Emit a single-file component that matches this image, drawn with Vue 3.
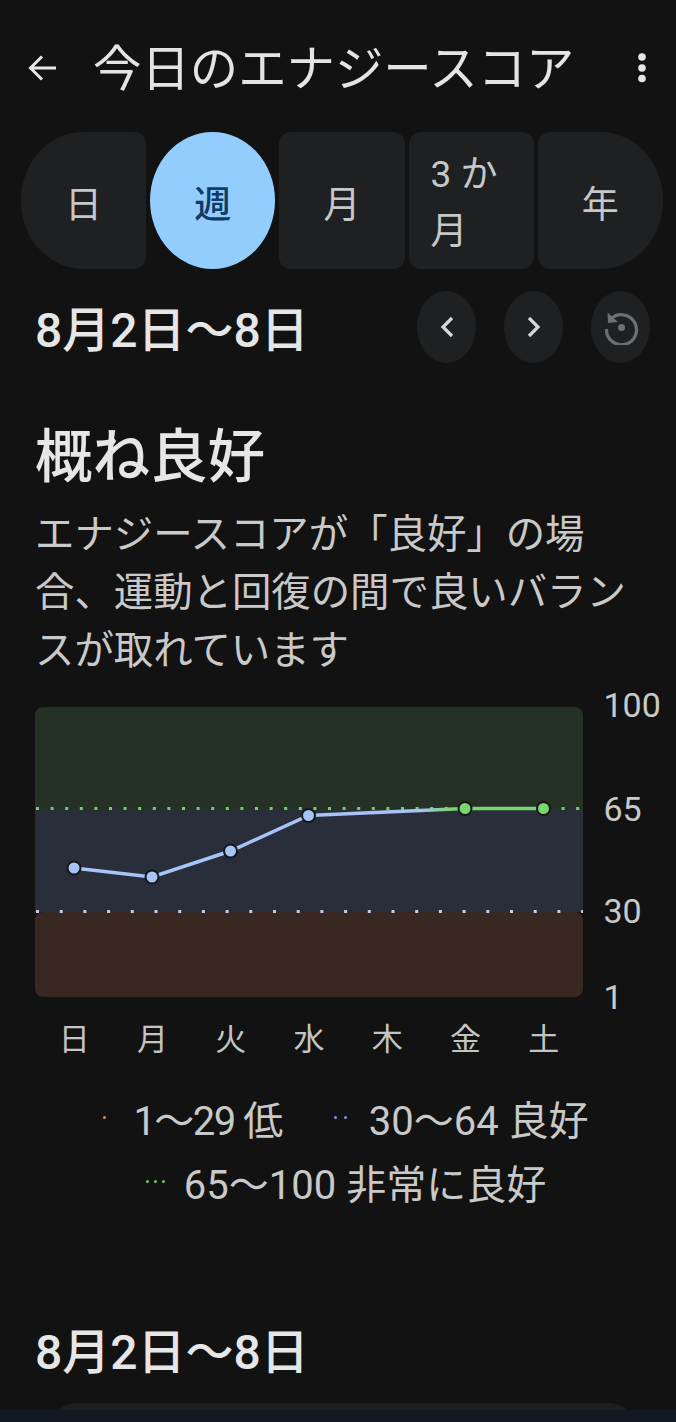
<template>
  <div class="page">
    <header class="top-bar">
      <svg class="back" width="30" height="28" viewBox="0 0 30 28">
        <path d="M28 14H3M14 2.5 2.5 14 14 25.5" fill="none" stroke="#e6e6e6" stroke-width="3" />
      </svg>
      <h1 class="title">今日のエナジースコア</h1>
      <svg class="more" width="10" height="32" viewBox="0 0 10 32">
        <circle cx="5" cy="5" r="3.8" fill="#e6e6e6" />
        <circle cx="5" cy="16" r="3.8" fill="#e6e6e6" />
        <circle cx="5" cy="26.500" r="3.800" fill="#e6e6e6" />
      </svg>
    </header>

    <div class="segments">
      <button
        v-for="(tab, i) in tabs"
        :key="tab"
        class="segment"
        :class="{ first: i === 0, last: i === tabs.length - 1, active: tab === '週', wrap: tab.length > 2 }"
      >{{ tab }}</button>
    </div>

    <div class="date-row">
      <div class="date">8月2日〜8日</div>
      <div class="date-buttons">
        <button class="round-btn">
          <svg width="16" height="22" viewBox="0 0 16 22">
            <path d="M13 2 4 11l9 9" fill="none" stroke="#d5d6d6" stroke-width="3.200" />
          </svg>
        </button>
        <button class="round-btn">
          <svg width="16" height="22" viewBox="0 0 16 22">
            <path d="m3 2 9 9-9 9" fill="none" stroke="#d5d6d6" stroke-width="3.200" />
          </svg>
        </button>
        <button class="round-btn">
          <svg width="36" height="36" viewBox="0 0 36 36">
            <path d="M7.500 10.500A15 15 0 1 1 3.500 20" fill="none" stroke="#6d6f70" stroke-width="3.200" />
            <path d="M4.500 3.500 5 14l10-1z" fill="#6d6f70" />
            <circle cx="18.500" cy="18.500" r="3.500" fill="#6d6f70" />
          </svg>
        </button>
      </div>
    </div>

    <section class="summary">
      <h2 class="status">概ね良好</h2>
      <p class="desc">エナジースコアが「良好」の場合、運動と回復の間で良いバランスが取れています</p>
    </section>

    <div class="chart">
      <div class="plot">
        <div class="band high"></div>
        <div class="band mid"></div>
        <div class="band low"></div>
        <svg class="lines" width="548" height="290" viewBox="0 0 548 290">
          <defs>
            <linearGradient id="scoreLine" gradientUnits="userSpaceOnUse" x1="0" y1="0" x2="548" y2="0">
              <stop offset="0.7" stop-color="#a6c4f6" />
              <stop offset="0.76" stop-color="#78d56f" />
            </linearGradient>
          </defs>
          <line x1="1" y1="101.500" x2="548" y2="101.500" stroke="#72cf6b" stroke-width="3" stroke-dasharray="3 11.600" />
          <line x1="1" y1="204.500" x2="548" y2="204.500" stroke="#c0cff0" stroke-width="3" stroke-dasharray="3 20.700" />
          <polyline :points="linePoints" fill="none" stroke="url(#scoreLine)" stroke-width="3.500" />
          <circle
            v-for="p in points"
            :key="p.x"
            :cx="p.x"
            :cy="p.y"
            r="6.500"
            :fill="p.good ? '#78d56f' : '#a6c4f6'"
            stroke="#14161a"
            stroke-width="2"
          />
        </svg>
        <span
          v-for="a in axis"
          :key="a.label"
          class="axis-label"
          :style="{ top: a.top + 'px' }"
        >{{ a.label }}</span>
      </div>
      <div class="days">
        <span v-for="d in days" :key="d" class="day">{{ d }}</span>
      </div>
    </div>

    <div class="legend">
      <div class="legend-row">
        <div class="legend-item">
          <span class="marks"><i class="mark orange"></i></span>
          <span class="tight">1〜29 低</span>
        </div>
        <div class="legend-item">
          <span class="marks blue-marks"><i class="mark blue"></i><i class="mark blue"></i></span>
          <span>30〜64 良好</span>
        </div>
      </div>
      <div class="legend-row">
        <div class="legend-item">
          <span class="marks green-marks"><i class="mark green"></i><i class="mark green"></i><i class="mark green"></i></span>
          <span>65〜100 非常に良好</span>
        </div>
      </div>
    </div>

    <div class="date second">8月2日〜8日</div>

    <div class="bottom">
      <div class="next-card"></div>
      <div class="nav-strip"></div>
    </div>
  </div>
</template>

<script setup>
const tabs = ['日', '週', '月', '3 か月', '年']
const days = ['日', '月', '火', '水', '木', '金', '土']

// x and y inside the plot, the last two are already in the green band
const points = [
  { x: 39, y: 161 },
  { x: 117, y: 170 },
  { x: 195.500, y: 144 },
  { x: 273.500, y: 108.500 },
  { x: 430, y: 101.500, good: true },
  { x: 508.500, y: 101.500, good: true },
]
const linePoints = points.map((p) => p.x + ',' + p.y).join(' ')

const axis = [
  { label: '100', top: -23 },
  { label: '65', top: 81 },
  { label: '30', top: 183 },
  { label: '1', top: 269 },
]
</script>

<style>
html,
body {
  background: #121212;
  overflow: hidden;
}
</style>

<style scoped>
.page {
  width: 676px;
  height: 1422px;
  box-sizing: border-box;
  position: relative;
  overflow: hidden;
  background: #121212;
  color: #e6e6e6;
  font-family: Roboto, "Noto Sans CJK JP", sans-serif;
}

.top-bar {
  display: flex;
  align-items: center;
  height: 132px;
  padding: 4px 0 0 28px;
  box-sizing: border-box;
}

.title {
  margin: 3px 0 0 35px;
  font-size: 48.400px;
  font-weight: 400;
  line-height: 60px;
  color: #e4e4e4;
  white-space: nowrap;
}

.more {
  margin-left: 62px;
}

.segments {
  display: flex;
  gap: 4px;
  padding-left: 21px;
}

.segment {
  width: 125.200px;
  height: 137px;
  flex: none;
  border: 0;
  border-radius: 12px;
  padding: 9px 22px 0;
  background: #1e2022;
  color: #c6c7c7;
  font: inherit;
  font-size: 37px;
  line-height: 57px;
}

.segment.wrap {
  padding-top: 5px;
  text-align: left;
}

.segment.first {
  border-radius: 62px 12px 12px 62px / 68px 12px 12px 68px;
}

.segment.last {
  border-radius: 12px 62px 62px 12px / 12px 68px 68px 12px;
}

.segment.active {
  border-radius: 50%;
  background: #93cdfd;
  color: #0f3c66;
  font-weight: 500;
}

.date-row {
  display: flex;
  justify-content: space-between;
  align-items: flex-start;
  padding: 22px 26px 0 35px;
}

.date {
  padding-top: 4px;
  font-size: 48px;
  font-weight: 500;
  line-height: 72px;
  color: #e6e6e6;
  white-space: nowrap;
}

.date-buttons {
  display: flex;
  gap: 28px;
}

.round-btn {
  display: flex;
  align-items: center;
  justify-content: center;
  width: 59px;
  height: 72px;
  padding: 0;
  border: 0;
  border-radius: 50%;
  background: #1e2022;
}

.summary {
  padding: 56px 35px 0;
}

.status {
  margin: 0;
  font-size: 57.500px;
  font-weight: 500;
  line-height: 70px;
  color: #e6e6e6;
}

.desc {
  margin: 13px 0 0;
  width: 604px;
  font-size: 39.400px;
  line-height: 58px;
  color: #c9c9c9;
}

.chart {
  padding: 27px 0 0 35px;
}

.plot {
  position: relative;
  width: 548px;
  height: 290px;
}

.band {
  background: #253124;
}

.band.high {
  height: 102px;
  border-radius: 8px 8px 0 0;
}

.band.mid {
  height: 103px;
  background: #2a2e3b;
}

.band.low {
  height: 85px;
  border-radius: 8px;
  background: #382821;
}

.lines {
  position: absolute;
  top: 0;
  left: 0;
}

.axis-label {
  position: absolute;
  left: 568.500px;
  font-size: 34px;
  line-height: 42px;
  color: #c9c9c9;
}

.days {
  display: flex;
  width: 548px;
  padding-top: 20px;
}

.day {
  flex: 1;
  text-align: center;
  font-size: 31px;
  line-height: 46px;
  color: #c4c4c4;
}

.legend {
  display: flex;
  flex-direction: column;
  align-items: center;
  margin-top: 27px;
  padding-left: 16px;
  font-size: 40px;
  line-height: 64px;
  color: #c9c9c9;
}

.legend-row {
  display: flex;
  gap: 52px;
}

.legend-item {
  display: flex;
  align-items: center;
}

.tight {
  letter-spacing: -1.500px;
}

.marks {
  display: flex;
  gap: 8px;
  width: 30px;
  position: relative;
  top: -5px;
}

.blue-marks {
  gap: 7px;
  width: 35px;
}

.green-marks {
  gap: 5px;
  width: 38px;
}

.mark {
  width: 3px;
  height: 3px;
  border-radius: 50%;
}

.orange {
  background: #e58a5f;
}

.blue {
  background: #7d94e0;
}

.green {
  background: #6cc764;
}

.second {
  position: absolute;
  left: 35px;
  top: 1313px;
}

.bottom {
  position: absolute;
  left: 0;
  right: 0;
  top: 1403px;
  height: 19px;
}

.next-card {
  height: 30px;
  margin: 0 38px 0 47px;
  border-radius: 30px 30px 0 0;
  background: #1c1e20;
}

.nav-strip {
  position: absolute;
  left: 0;
  right: 0;
  top: 7px;
  height: 12px;
  background: #131923;
}
</style>
